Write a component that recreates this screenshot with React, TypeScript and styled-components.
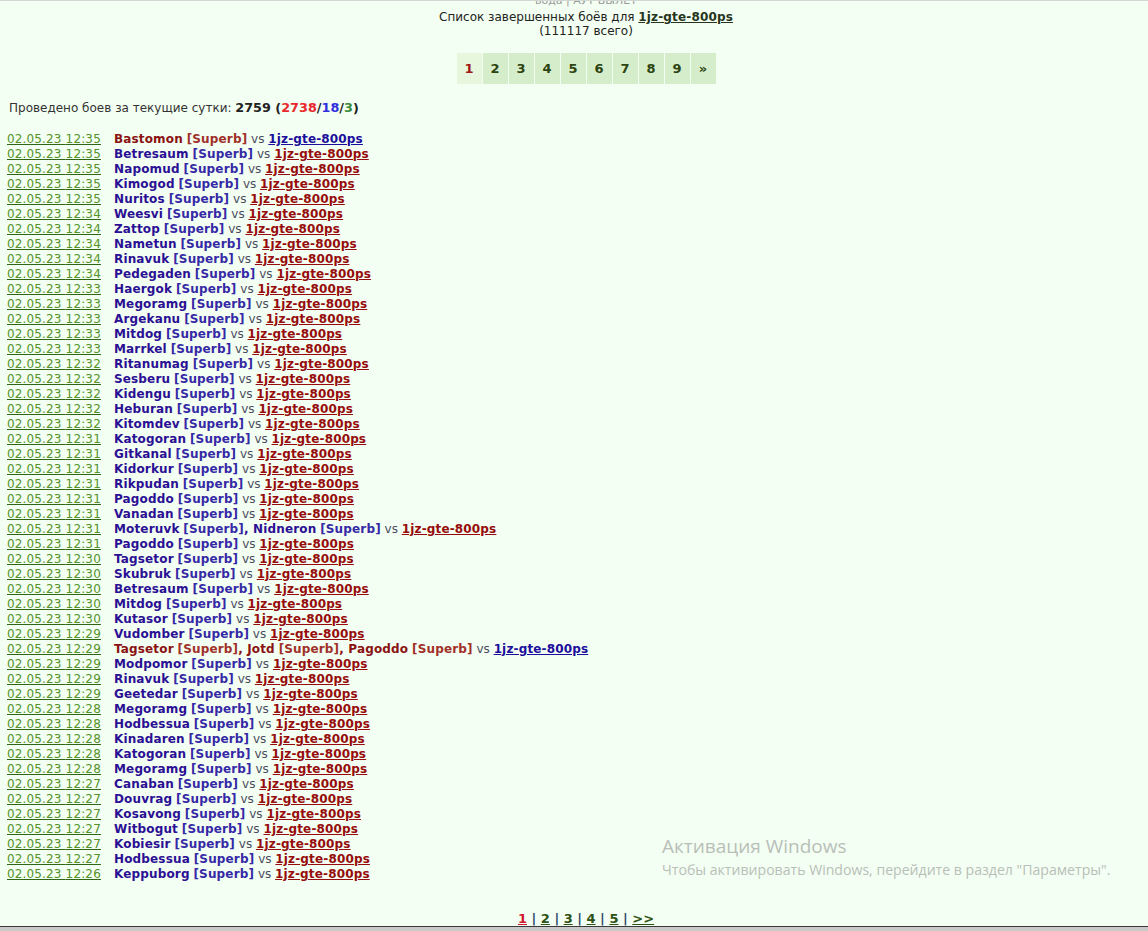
import React from 'react';
import styled, { createGlobalStyle } from 'styled-components';

type Team = 'red' | 'blue';

interface Battle {
  time: string;
  names: string[];
  team: Team;
}

const blueNames: [string, string][] = [
  ['12:35', 'Betresaum'], ['12:35', 'Napomud'], ['12:35', 'Kimogod'], ['12:35', 'Nuritos'],
  ['12:34', 'Weesvi'], ['12:34', 'Zattop'], ['12:34', 'Nametun'], ['12:34', 'Rinavuk'],
  ['12:34', 'Pedegaden'], ['12:33', 'Haergok'], ['12:33', 'Megoramg'], ['12:33', 'Argekanu'],
  ['12:33', 'Mitdog'], ['12:33', 'Marrkel'], ['12:32', 'Ritanumag'], ['12:32', 'Sesberu'],
  ['12:32', 'Kidengu'], ['12:32', 'Heburan'], ['12:32', 'Kitomdev'], ['12:31', 'Katogoran'],
  ['12:31', 'Gitkanal'], ['12:31', 'Kidorkur'], ['12:31', 'Rikpudan'], ['12:31', 'Pagoddo'],
  ['12:31', 'Vanadan'],
];

const tailNames: [string, string][] = [
  ['12:29', 'Modpomor'], ['12:29', 'Rinavuk'], ['12:29', 'Geetedar'], ['12:28', 'Megoramg'],
  ['12:28', 'Hodbessua'], ['12:28', 'Kinadaren'], ['12:28', 'Katogoran'], ['12:28', 'Megoramg'],
  ['12:27', 'Canaban'], ['12:27', 'Douvrag'], ['12:27', 'Kosavong'], ['12:27', 'Witbogut'],
  ['12:27', 'Kobiesir'], ['12:27', 'Hodbessua'], ['12:26', 'Keppuborg'],
];

const battles: Battle[] = [
  { time: '12:35', names: ['Bastomon'], team: 'red' },
  ...blueNames.map(([time, n]) => ({ time, names: [n], team: 'blue' as Team })),
  { time: '12:31', names: ['Moteruvk', 'Nidneron'], team: 'blue' },
  { time: '12:31', names: ['Pagoddo'], team: 'blue' },
  { time: '12:30', names: ['Tagsetor'], team: 'blue' },
  { time: '12:30', names: ['Skubruk'], team: 'blue' },
  { time: '12:30', names: ['Betresaum'], team: 'blue' },
  { time: '12:30', names: ['Mitdog'], team: 'blue' },
  { time: '12:30', names: ['Kutasor'], team: 'blue' },
  { time: '12:29', names: ['Vudomber'], team: 'blue' },
  { time: '12:29', names: ['Tagsetor', 'Jotd', 'Pagoddo'], team: 'red' },
  ...tailNames.map(([time, n]) => ({ time, names: [n], team: 'blue' as Team })),
];

// DejaVu Sans Bold runs a touch narrower than Verdana Bold
const boldText = `
  font-weight: bold;
  font-size: 12px;
  letter-spacing: 0.15px;
`;

const GlobalStyle = createGlobalStyle`
  html, body {
    margin: 0;
    padding: 0;
    background: #f3fff2;
    overflow: hidden;
  }
  body {
    font-family: "DejaVu Sans", Verdana, sans-serif;
    font-size: 12px;
    color: #222;
  }
`;

const Page = styled.div`
  position: relative;
  width: 1172px;
  height: 931px;
  box-sizing: border-box;
  padding: 0 8px;
  display: flex;
  flex-direction: column;
  overflow: hidden;
  border-top: 1px solid #d4d8d4;
`;

const TopLinks = styled.div`
  margin-top: -7px;
  text-align: center;
  font-size: 11px;
  line-height: 13px;
  color: #9a9a9a;
`;

const Title = styled.div`
  margin-top: 3px;
  text-align: center;
  line-height: 14px;
`;

const OwnerLink = styled.a`
  ${boldText}
  color: #26351c;
  text-decoration: underline;
`;

const Pager = styled.div`
  margin-top: 15px;
  align-self: center;
  display: flex;
  gap: 1px;
`;

const PageCell = styled.div<{ $current?: boolean }>`
  height: 31px;
  min-width: 25px;
  box-sizing: border-box;
  padding: 0 7px;
  display: flex;
  align-items: center;
  justify-content: center;
  font-weight: bold;
  font-size: 13px;
  background: ${(p) => (p.$current ? '#e6f7dd' : '#d6edcc')};
  color: ${(p) => (p.$current ? '#a01818' : '#2c4410')};
`;

const Stats = styled.div`
  margin-top: 16px;
  line-height: 15px;
  padding-left: 1px;
  color: #333;
`;

const Num = styled.span<{ $c?: string }>`
  font-weight: bold;
  font-size: 12.8px;
  color: ${(p) => p.$c || '#222'};
`;

const List = styled.div`
  margin-top: 16px;
  display: flex;
  flex-direction: column;
`;

const Row = styled.div`
  display: flex;
  align-items: baseline;
  line-height: 15px;
  height: 15px;
  white-space: nowrap;
`;

const DateLink = styled.a`
  width: 107px;
  flex: none;
  margin-left: -1px;
  letter-spacing: 0.15px;
  color: #55922a;
  text-decoration: underline;
  text-decoration-color: #2f6614;
`;

const Player = styled.span<{ $team: Team }>`
  ${boldText}
  color: ${(p) => (p.$team === 'red' ? '#8a1212' : '#2b0f94')};
`;

const Clan = styled.span<{ $team: Team }>`
  ${boldText}
  color: ${(p) => (p.$team === 'red' ? '#a0302a' : '#3629a6')};
`;

const Vs = styled.span`
  color: #4a4a60;
`;

const Opponent = styled.a<{ $team: Team }>`
  ${boldText}
  text-decoration: underline;
  color: ${(p) => (p.$team === 'red' ? '#960c0c' : '#1c0e9c')};
`;

const BottomPager = styled.div`
  margin-top: 29px;
  text-align: center;
  line-height: 15px;
  font-weight: bold;
  font-size: 13px;
  color: #2c4a6a;
`;

const BottomLink = styled.a<{ $current?: boolean }>`
  text-decoration: underline;
  color: ${(p) => (p.$current ? '#d01830' : '#2d5214')};
`;

const FrameEdge = styled.div`
  margin: auto -8px 0;
  height: 4px;
  border-top: 1px solid #3a3a3a;
  background: #c9c9c9;
`;

const Watermark = styled.div`
  position: absolute;
  left: 662px;
  top: 832px;
  font-family: "Open Sans", "Noto Sans", sans-serif;
  color: #b9beb9;
  pointer-events: none;
`;

const WatermarkTitle = styled.div`
  font-size: 19px;
  line-height: 26px;
`;

const WatermarkText = styled.div`
  font-size: 14.1px;
  line-height: 20px;
  margin-top: 1px;
`;

function BattleRow({ b }: { b: Battle }) {
  const opp: Team = b.team === 'red' ? 'blue' : 'red';
  return (
    <Row>
      <DateLink>02.05.23 {b.time}</DateLink>
      <span>
        {b.names.map((n, i) => (
          <React.Fragment key={i}>
            {i > 0 && <Player $team={b.team}>, </Player>}
            <Player $team={b.team}>{n}</Player>{' '}
            <Clan $team={b.team}>[Superb]</Clan>
          </React.Fragment>
        ))}{' '}
        <Vs>vs</Vs> <Opponent $team={opp}>1jz-gte-800ps</Opponent>
      </span>
    </Row>
  );
}

export default function App() {
  const pages = ['1', '2', '3', '4', '5', '6', '7', '8', '9', '»'];
  const bottom = ['1', '2', '3', '4', '5', '>>'];
  return (
    <>
      <GlobalStyle />
      <Page>
        <TopLinks>вода | АУТ ВЫЛЕТ</TopLinks>
        <Title>
          Список завершенных боёв для <OwnerLink>1jz-gte-800ps</OwnerLink>
          <br />
          (111117 всего)
        </Title>
        <Pager>
          {pages.map((p, i) => (
            <PageCell key={p} $current={i === 0}>{p}</PageCell>
          ))}
        </Pager>
        <Stats>
          Проведено боев за текущие сутки: <Num>2759 (</Num>
          <Num $c="#e8262c">2738</Num>
          <Num>/</Num>
          <Num $c="#2f2fe0">18</Num>
          <Num>/</Num>
          <Num $c="#3c8a3c">3</Num>
          <Num>)</Num>
        </Stats>
        <List>
          {battles.map((b, i) => (
            <BattleRow key={i} b={b} />
          ))}
        </List>
        <BottomPager>
          {bottom.map((p, i) => (
            <React.Fragment key={p}>
              {i > 0 && ' | '}
              <BottomLink $current={i === 0}>{p}</BottomLink>
            </React.Fragment>
          ))}
        </BottomPager>
        <FrameEdge />
        <Watermark>
          <WatermarkTitle>Активация Windows</WatermarkTitle>
          <WatermarkText>Чтобы активировать Windows, перейдите в раздел "Параметры".</WatermarkText>
        </Watermark>
      </Page>
    </>
  );
}
